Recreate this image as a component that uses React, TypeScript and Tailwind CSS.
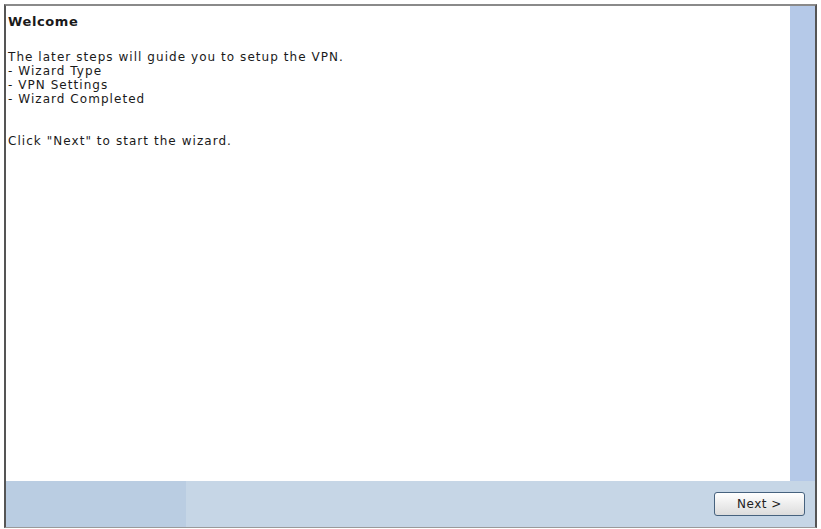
export default function App() {
  const font = { fontFamily: '"DejaVu Sans", Verdana, sans-serif' };
  return (
    <div className="w-[821px] h-[529px] bg-white overflow-hidden pt-[4px] pl-[4px]" style={font}>
      <div className="w-[813px] h-[524px] flex flex-col border-t-[2px] border-t-[#8a8a8a] border-l-[2px] border-l-[#555] border-r-[2px] border-r-[#555] border-b border-b-[#9a9a9a]">
        <div className="flex flex-1 min-h-0">
          <div className="flex-1 bg-white pl-[2px] pt-[9px] text-[12px] leading-[14px] text-[#1a1a1a] tracking-[1.05px]">
            <div className="font-bold text-[13px] tracking-[0.6px] mb-[21px]">Welcome</div>
            <div>The later steps will guide you to setup the VPN.</div>
            <div>- Wizard Type</div>
            <div>- VPN Settings</div>
            <div>- Wizard Completed</div>
            <div className="mt-[28px]">Click "Next" to start the wizard.</div>
          </div>
          <div className="w-[25px] bg-[#b5c9e8]" />
        </div>
        <div className="h-[46px] flex bg-[#c6d6e6]">
          <div className="w-[180px] bg-[#bacde2]" />
          <div className="flex-1 flex items-center justify-end pr-[10px]">
            <button className="w-[91px] h-[24px] rounded-[3px] border border-[#46627e] bg-gradient-to-b from-white to-[#dcdcdc] text-[12px] tracking-[0.5px] text-[#222]">
              Next &gt;
            </button>
          </div>
        </div>
      </div>
    </div>
  );
}
